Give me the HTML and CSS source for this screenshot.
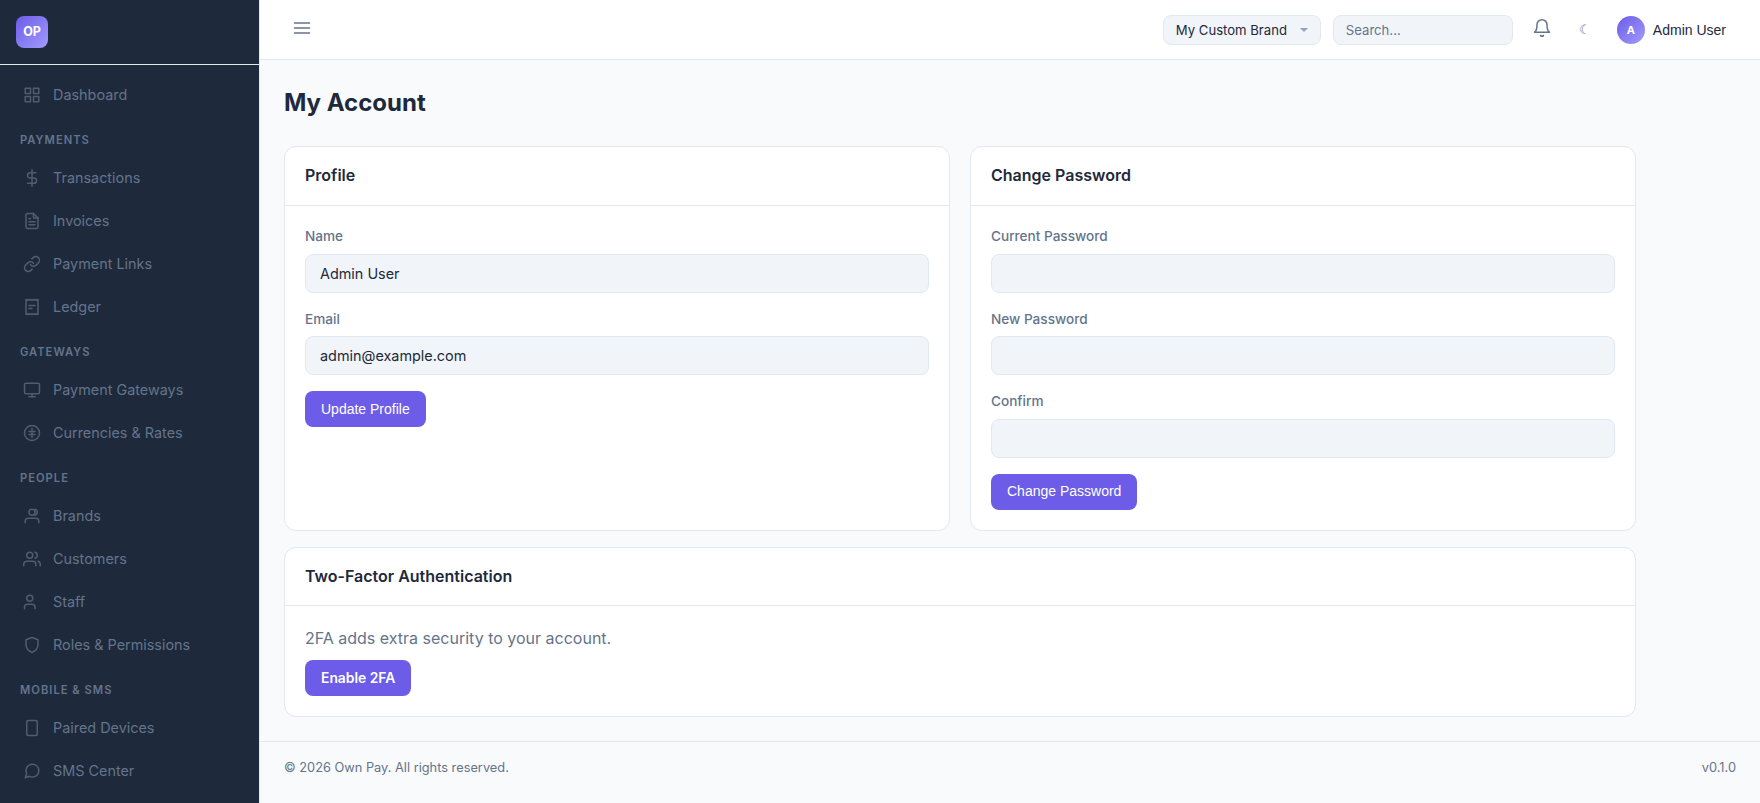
FILE: index.html
```html
<!DOCTYPE html>
<html lang="en">
<head>
<meta charset="utf-8">
<title>My Account</title>
<link rel="stylesheet" href="styles.css">
</head>
<body>
<div class="app">
  <aside class="sidebar">
    <div class="brand"><span class="logo">OP</span></div>
    <nav class="nav">
      <a class="item"><svg class="icon" viewBox="0 0 24 24"><rect x="3" y="3" width="7" height="7"/><rect x="14" y="3" width="7" height="7"/><rect x="14" y="14" width="7" height="7"/><rect x="3" y="14" width="7" height="7"/></svg>Dashboard</a>
      <div class="group">Payments</div>
      <a class="item"><svg class="icon" viewBox="0 0 24 24"><path d="M12 1v22M17 5H9.500a3.500 3.500 0 0 0 0 7h5a3.500 3.500 0 0 1 0 7H6"/></svg>Transactions</a>
      <a class="item"><svg class="icon" viewBox="0 0 24 24"><path d="M14 2H6a2 2 0 0 0-2 2v16a2 2 0 0 0 2 2h12a2 2 0 0 0 2-2V8z"/><path d="M14 2v6h6M16 13H8M16 17H8M10 9H8"/></svg>Invoices</a>
      <a class="item"><svg class="icon" viewBox="0 0 24 24"><path d="M10 13a5 5 0 0 0 7.540.540l3-3a5 5 0 0 0-7.070-7.070l-1.720 1.710"/><path d="M14 11a5 5 0 0 0-7.540-.540l-3 3a5 5 0 0 0 7.070 7.070l1.710-1.710"/></svg>Payment Links</a>
      <a class="item"><svg class="icon" viewBox="0 0 24 24"><path d="M4 2v20l2-1 2 1 2-1 2 1 2-1 2 1 2-1 2 1V2l-2 1-2-1-2 1-2-1-2 1-2-1-2 1-2-1z"/><path d="M8 10h8M8 14h4"/></svg>Ledger</a>
      <div class="group">Gateways</div>
      <a class="item"><svg class="icon" viewBox="0 0 24 24"><rect x="2" y="3" width="20" height="14" rx="2"/><path d="M8 21h8M12 17v4"/></svg>Payment Gateways</a>
      <a class="item"><svg class="icon" viewBox="0 0 24 24"><circle cx="12" cy="12" r="10"/><path d="M12 6v12M8 10h8M8 14h8"/></svg>Currencies &amp; Rates</a>
      <div class="group">People</div>
      <a class="item"><svg class="icon" viewBox="0 0 24 24"><path d="M21 21v-2a4 4 0 0 0-4-4H7a4 4 0 0 0-4 4v2"/><circle cx="12" cy="7" r="4"/><path d="M16 3.130a4 4 0 0 1 0 7.750"/></svg>Brands</a>
      <a class="item"><svg class="icon" viewBox="0 0 24 24"><path d="M17 21v-2a4 4 0 0 0-4-4H5a4 4 0 0 0-4 4v2"/><circle cx="9" cy="7" r="4"/><path d="M23 21v-2a4 4 0 0 0-3-3.870M16 3.130a4 4 0 0 1 0 7.750"/></svg>Customers</a>
      <a class="item"><svg class="icon" viewBox="0 0 24 24"><path d="M16 21v-2a4 4 0 0 0-4-4H6a4 4 0 0 0-4 4v2"/><circle cx="9" cy="7" r="4"/></svg>Staff</a>
      <a class="item"><svg class="icon" viewBox="0 0 24 24"><path d="M12 22s8-4 8-10V5l-8-3-8 3v7c0 6 8 10 8 10z"/></svg>Roles &amp; Permissions</a>
      <div class="group">Mobile &amp; SMS</div>
      <a class="item"><svg class="icon" viewBox="0 0 24 24"><rect x="5" y="2" width="14" height="20" rx="2"/></svg>Paired Devices</a>
      <a class="item"><svg class="icon" viewBox="0 0 24 24"><path d="M21 11.500a8.380 8.380 0 0 1-.9 3.800 8.500 8.500 0 0 1-7.600 4.700 8.380 8.380 0 0 1-3.800-.9L3 21l1.900-5.700a8.380 8.380 0 0 1-.9-3.800 8.500 8.500 0 0 1 4.700-7.600 8.380 8.380 0 0 1 3.800-.9h.5a8.480 8.480 0 0 1 8 8v.5z"/></svg>SMS Center</a>
    </nav>
  </aside>
  <div class="main">
    <header class="topbar">
      <svg class="menu" viewBox="0 0 24 24"><path d="M3 6h18M3 12h18M3 18h18"/></svg>
      <div class="tools">
        <div class="select">My Custom Brand<span class="caret"></span></div>
        <input class="search" type="text" placeholder="Search...">
        <svg class="bell" viewBox="0 0 24 24"><path d="M18 8A6 6 0 0 0 6 8c0 7-3 9-3 9h18s-3-2-3-9M13.730 21a2 2 0 0 1-3.460 0"/></svg>
        <span class="moon">☾</span>
        <div class="user"><span class="avatar">A</span>Admin User</div>
      </div>
    </header>
    <main class="content">
      <h1 class="title">My Account</h1>
      <div class="cards">
        <section class="card">
          <h2 class="card-head">Profile</h2>
          <form class="card-body">
            <label class="label">Name</label>
            <input class="input" type="text" value="Admin User">
            <label class="label">Email</label>
            <input class="input" type="text" value="admin@example.com">
            <button class="btn" type="button">Update Profile</button>
          </form>
        </section>
        <section class="card">
          <h2 class="card-head">Change Password</h2>
          <form class="card-body">
            <label class="label">Current Password</label>
            <input class="input" type="password">
            <label class="label">New Password</label>
            <input class="input" type="password">
            <label class="label">Confirm</label>
            <input class="input" type="password">
            <button class="btn" type="button">Change Password</button>
          </form>
        </section>
        <section class="card wide">
          <h2 class="card-head">Two-Factor Authentication</h2>
          <div class="card-body">
            <p class="note">2FA adds extra security to your account.</p>
            <a class="btn link">Enable 2FA</a>
          </div>
        </section>
      </div>
    </main>
    <footer class="footer"><span>© 2026 Own Pay. All rights reserved.</span><span>v0.1.0</span></footer>
  </div>
</div>
</body>
</html>
```
FILE: styles.css
```css
* { box-sizing: border-box; }
body {
  margin: 0;
  font-family: Inter, sans-serif;
  font-size: 16px;
  line-height: 1.6;
  color: #1e293b;
  background: #f8fafc;
}
.app { display: flex; height: 803px; overflow: hidden; }
.sidebar {
  width: 260px;
  flex: none;
  background: #1e293b;
  border-right: 1px solid #e2e8f0;
  overflow: hidden;
}
.brand { height: 65px; padding: 16px; border-bottom: 1px solid #e2e8f0; }
.logo {
  display: flex;
  align-items: center;
  justify-content: center;
  width: 32px;
  height: 32px;
  border-radius: 8px;
  background: linear-gradient(135deg, #6c5ce7, #a29bfe);
  color: #fff;
  font-size: 12.5px;
  font-weight: 700;
}
.nav { padding: 8px; }
.item {
  display: flex;
  align-items: center;
  gap: 12px;
  height: 43px;
  padding: 0 15px;
  font-size: 14.4px;
  color: #64748b;
}
.group {
  height: 40px;
  padding: 15px 12px 0;
  font-size: 11.2px;
  line-height: 18px;
  font-weight: 600;
  letter-spacing: 1px;
  text-transform: uppercase;
  color: #64748b;
}
.icon, .menu, .bell {
  flex: none;
  fill: none;
  stroke: currentColor;
  stroke-width: 2;
  stroke-linecap: round;
  stroke-linejoin: round;
}
.icon { width: 18px; height: 18px; opacity: .7; }
.main { flex: 1; min-width: 0; display: flex; flex-direction: column; }
.topbar {
  display: flex;
  align-items: center;
  justify-content: space-between;
  height: 60px;
  flex: none;
  padding: 0 34px 0 32px;
  background: #fff;
  border-bottom: 1px solid #e2e8f0;
}
.menu { width: 20px; height: 20px; color: #64748b; margin-top: -3px; }
.tools { display: flex; align-items: center; }
.select, .search {
  height: 30px;
  border: 1px solid #e2e8f0;
  border-radius: 8px;
  background: #f1f5f9;
  font: 13.12px Inter, sans-serif;
  padding: 0 12px;
}
.select {
  display: flex;
  align-items: center;
  justify-content: space-between;
  width: 158px;
  margin-right: 12px;
}
.caret {
  border: 4px solid transparent;
  border-top-color: #94a3b8;
  border-bottom: 0;
}
.search { width: 180px; }
.search::placeholder { color: #64748b; }
.bell { width: 20px; height: 20px; margin: -3px 0 0 19px; color: #64748b; stroke-width: 1.8; }
.moon { width: 10px; margin: 0 28px 0 27px; font-size: 13px; color: #64748b; }
.user {
  display: flex;
  align-items: center;
  gap: 8px;
  font: 14px "Liberation Sans", Arial, sans-serif;
}
.avatar {
  display: flex;
  align-items: center;
  justify-content: center;
  width: 28px;
  height: 28px;
  border-radius: 50%;
  background: linear-gradient(135deg, #6c5ce7, #a29bfe);
  color: #fff;
  font: 700 11px Inter, sans-serif;
}
.content { padding: 24px; }
.title { margin: 0 0 24px; font-size: 24px; line-height: 38.4px; font-weight: 700; }
.cards {
  display: grid;
  grid-template-columns: 1fr 1fr;
  column-gap: 20px;
  row-gap: 16px;
  width: 1352px;
}
.card { background: #fff; border: 1px solid #e2e8f0; border-radius: 12px; }
.wide { grid-column: 1 / -1; }
.card-head {
  margin: 0;
  padding: 16px 20px;
  border-bottom: 1px solid #e2e8f0;
  font-size: 16px;
  font-weight: 600;
}
.card-body { padding: 20px; }
.label {
  display: block;
  margin-bottom: 6px;
  font-size: 13.6px;
  font-weight: 500;
  color: #64748b;
}
.input {
  display: block;
  width: 100%;
  height: 38.8px;
  margin-bottom: 16px;
  padding: 0 14px;
  border: 1px solid #e2e8f0;
  border-radius: 8px;
  background: #f1f5f9;
  font: 14.4px Inter, sans-serif;
  color: #1e293b;
}
.btn {
  display: flex;
  width: fit-content;
  align-items: center;
  height: 36px;
  padding: 0 16px 1px;
  border: 0;
  border-radius: 8px;
  background: #6c5ce7;
  color: #fff;
  font: 14px "Liberation Sans", Arial, sans-serif;
}
.link { padding-bottom: 0; font: 600 13.85px Inter, sans-serif; }
.note { margin: 0 0 8px; color: #64748b; }
.footer {
  display: flex;
  justify-content: space-between;
  padding: 16px 24px;
  border-top: 1px solid #e2e8f0;
  font-size: 12.8px;
  color: #64748b;
}
```
